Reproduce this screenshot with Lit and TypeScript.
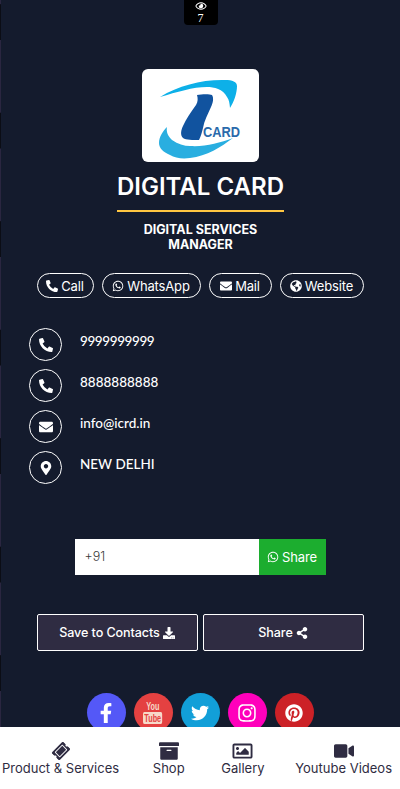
import { LitElement, html, css } from "lit";
import { customElement } from "lit/decorators.js";

const fa = (vb: string, d: string, cls = "ic") =>
  html`<svg class=${cls} viewBox=${vb} aria-hidden="true"><path fill="currentColor" d=${d}></path></svg>`;

const PHONE = "M497.39 361.8l-112-48a24 24 0 0 0-28 6.9l-49.6 60.6A370.66 370.66 0 0 1 130.6 204.11l60.6-49.6a23.94 23.94 0 0 0 6.9-28l-48-112A24.16 24.16 0 0 0 122.6.61l-104 24A24 24 0 0 0 0 48c0 256.5 207.9 464 464 464a24 24 0 0 0 23.4-18.6l24-104a24.29 24.29 0 0 0-14.01-27.6z";
const WA = "M380.9 97.1C339 55.1 283.2 32 223.9 32c-122.4 0-222 99.6-222 222 0 39.1 10.2 77.3 29.6 111L0 480l117.7-30.9c32.4 17.7 68.9 27 106.1 27h.1c122.3 0 224.1-99.6 224.1-222 0-59.3-25.2-115-67.1-157zm-157 341.6c-33.2 0-65.7-8.9-94-25.7l-6.7-4-69.8 18.3L72 359.2l-4.4-7c-18.5-29.4-28.2-63.3-28.2-98.2 0-101.7 82.8-184.5 184.6-184.5 49.3 0 95.6 19.2 130.4 54.1 34.8 34.9 56.2 81.2 56.1 130.5 0 101.8-84.9 184.6-186.6 184.6zm101.2-138.2c-5.5-2.8-32.8-16.2-37.9-18-5.1-1.9-8.8-2.8-12.5 2.8-3.7 5.6-14.3 18-17.6 21.8-3.2 3.7-6.5 4.2-12 1.4-32.6-16.3-54-29.1-75.5-66-5.7-9.8 5.7-9.1 16.3-30.3 1.8-3.7.9-6.9-.5-9.7-1.4-2.8-12.5-30.1-17.1-41.2-4.5-10.8-9.1-9.3-12.5-9.5-3.2-.2-6.9-.2-10.6-.2-3.7 0-9.7 1.4-14.8 6.9-5.1 5.6-19.4 19-19.4 46.3 0 27.3 19.9 53.7 22.6 57.4 2.8 3.7 39.1 59.7 94.8 83.8 35.2 15.2 49 16.5 66.6 13.9 10.7-1.6 32.8-13.4 37.4-26.4 4.6-13 4.6-24.1 3.2-26.4-1.3-2.5-5-3.9-10.5-6.6z";
const MAIL = "M502.3 190.8c3.9-3.1 9.7-.2 9.7 4.7V400c0 26.5-21.5 48-48 48H48c-26.5 0-48-21.5-48-48V195.6c0-5 5.7-7.8 9.7-4.7 22.4 17.4 52.1 39.5 154.1 113.6 21.1 15.4 56.7 47.8 92.2 47.6 35.7.3 72-32.8 92.3-47.6 102-74.1 131.6-96.3 154-113.7zM256 320c23.2.4 56.6-29.2 73.4-41.4 132.7-96.3 142.8-104.7 173.4-128.7 5.8-4.5 9.2-11.5 9.2-18.9v-19c0-26.5-21.5-48-48-48H48C21.5 64 0 85.5 0 112v19c0 7.4 3.4 14.3 9.2 18.9 30.6 23.9 40.7 32.4 173.4 128.7 16.8 12.2 50.2 41.8 73.4 41.4z";
const GLOBE = "M248 8C111.03 8 0 119.03 0 256s111.03 248 248 248 248-111.03 248-248S384.970 8 248 8zm82.29 357.6c-3.9 3.880-7.990 7.950-11.310 11.280-2.990 3-5.100 6.700-6.170 10.710-1.510 5.660-2.730 11.380-4.770 16.870l-17.390 46.850c-13.760 3-28 4.690-42.650 4.690v-27.380c1.690-12.620-7.640-36.260-22.630-51.250-6-6-9.370-14.140-9.370-22.630v-32.010c0-11.640-6.270-22.340-16.460-27.970-14.370-7.950-34.810-19.060-48.810-26.110-11.480-5.780-22.100-13.140-31.650-21.750l-.8-.72a114.792 114.792 0 0 1-18.060-20.740c-9.380-13.770-24.660-36.420-34.590-51.140 20.470-45.500 57.360-82.040 103.200-101.890l24.010 12.010C203.480 89.740 216 82.010 216 70.110v-11.300c7.990-1.290 16.120-2.110 24.390-2.420l28.300 28.300c6.250 6.250 6.250 16.380 0 22.630L264 112l-10.340 10.340c-3.120 3.120-3.120 8.190 0 11.310l4.690 4.690c3.120 3.120 3.120 8.190 0 11.310l-8 8a8.008 8.008 0 0 1-5.670 2.340h-8.990c-2.080 0-4.080.810-5.580 2.270l-9.920 9.650a8.008 8.008 0 0 0-1.580 9.310l15.590 31.190c2.660 5.320-1.210 11.580-7.150 11.580h-5.640c-1.930 0-3.790-.700-5.240-1.960l-9.280-8.060a16.017 16.017 0 0 0-15.550-3.100l-31.170 10.390a11.950 11.950 0 0 0-8.170 11.340c0 4.530 2.560 8.660 6.610 10.690l11.080 5.540c9.410 4.710 19.790 7.160 30.310 7.160s22.590 27.290 32 32h66.750c8.490 0 16.620 3.370 22.630 9.370l13.690 13.690a30.503 30.503 0 0 1 8.930 21.570 46.536 46.536 0 0 1-13.720 32.980zM417 274.250c-5.790-1.450-10.840-5-14.150-9.970l-17.980-26.970a23.970 23.970 0 0 1 0-26.620l19.590-29.380c2.320-3.470 5.500-6.290 9.240-8.160l12.980-6.490C440.200 193.590 448 223.870 448 256c0 8.670-.740 17.160-1.830 25.540L417 274.250z";
const PIN = "M172.3 501.7C27 291 0 256 0 192 0 86 86 0 192 0s192 86 192 192c0 64-27 99-172.3 309.7-9.5 13.8-29.9 13.8-39.4 0zM192 272c44.2 0 80-35.8 80-80s-35.8-80-80-80-80 35.8-80 80 35.8 80 80 80z";
const DOWNLOAD = "M216 0h80c13.3 0 24 10.7 24 24v168h87.7c17.8 0 26.7 21.5 14.1 34.1L269.7 378.3c-7.5 7.500-19.8 7.500-27.3 0L90.1 226.1c-12.6-12.6-3.7-34.1 14.1-34.1H192V24c0-13.3 10.7-24 24-24zm296 376v112c0 13.3-10.7 24-24 24H24c-13.3 0-24-10.7-24-24V376c0-13.3 10.7-24 24-24h146.7l49 49c20.1 20.1 52.5 20.1 72.6 0l49-49H488c13.3 0 24 10.7 24 24zm-124 88c0-11-9-20-20-20s-20 9-20 20 9 20 20 20 20-9 20-20zm64 0c0-11-9-20-20-20s-20 9-20 20 9 20 20 20 20-9 20-20z";
const SHARE = "M352 320c-22.6 0-43.4 7.8-59.8 20.9l-102.5-64.1c3-13.7 3-27.9 0-41.6l102.5-64.1C308.6 184.2 329.4 192 352 192c53 0 96-43 96-96S405 0 352 0s-96 43-96 96c0 7.2.8 14.1 2.3 20.8l-102.5 64.1C139.4 167.8 118.6 160 96 160c-53 0-96 43-96 96s43 96 96 96c22.6 0 43.4-7.8 59.8-20.9l102.5 64.1c-1.5 6.8-2.3 13.8-2.3 20.8 0 53 43 96 96 96s96-43 96-96-43-96-96-96z";
const EYE = "M288 144a110.94 110.94 0 0 0-31.24 5 55.4 55.4 0 0 1 7.24 27 56 56 0 0 1-56 56 55.4 55.4 0 0 1-27-7.24A111.71 111.71 0 1 0 288 144zm284.52 97.4C518.29 135.59 410.93 64 288 64S57.680 135.640 3.480 241.410a32.350 32.350 0 0 0 0 29.190C57.710 376.410 165.070 448 288 448s230.320-71.640 284.520-177.410a32.350 32.350 0 0 0 0-29.190zM288 400c-98.650 0-189.090-55-237.930-144C98.910 167 189.340 112 288 112s189.090 55 237.930 144C477.100 345 386.660 400 288 400z";
const FB = "M279.1 288l14.2-92.7h-88.9v-60.1c0-25.4 12.4-50.1 52.2-50.1h40.4V6.3S260.4 0 225.4 0c-73.2 0-121.1 44.4-121.1 124.7v70.6H22.9V288h81.4v224h100.2V288z";
const TW = "M459.4 151.7c.3 4.5.3 9.1.3 13.6 0 138.7-105.6 298.6-298.6 298.6-59.5 0-114.7-17.2-161.1-47.1 8.4 1 16.6 1.3 25.3 1.3 49.1 0 94.2-16.6 130.3-44.8-46.1-1-84.8-31.2-98.1-72.8 6.5 1 13 1.6 19.8 1.6 9.4 0 18.8-1.3 27.6-3.6-48.1-9.7-84.1-52-84.1-103v-1.3c14 7.8 30.2 12.7 47.4 13.3-28.3-18.8-46.8-51-46.8-87.4 0-19.5 5.2-37.4 14.3-53 51.7 63.7 129.3 105.3 216.4 109.8-1.6-7.8-2.6-15.9-2.6-24 0-57.8 46.8-104.9 104.9-104.9 30.2 0 57.5 12.7 76.7 33.1 23.7-4.5 46.5-13.3 66.6-25.3-7.8 24-24.4 44.8-46.1 57.8 21.1-2.3 41.6-8.1 60.4-16.2-14.3 20.8-32.2 39.3-52.6 54.3z";
const IG = "M224.1 141c-63.6 0-114.9 51.3-114.9 114.9s51.3 114.9 114.9 114.9S339 319.5 339 255.9 287.7 141 224.1 141zm0 189.6c-41.1 0-74.7-33.5-74.7-74.7s33.5-74.7 74.7-74.7 74.7 33.5 74.7 74.7-33.6 74.7-74.7 74.7zm146.4-194.3c0 14.9-12 26.8-26.8 26.8-14.9 0-26.8-12-26.8-26.8s12-26.8 26.8-26.8 26.8 12 26.8 26.8zm76.1 27.2c-1.7-35.9-9.9-67.7-36.2-93.9-26.2-26.2-58-34.4-93.9-36.2-37-2.1-147.9-2.1-184.9 0-35.8 1.7-67.6 9.9-93.9 36.1s-34.4 58-36.2 93.9c-2.1 37-2.1 147.9 0 184.9 1.7 35.9 9.9 67.7 36.2 93.9s58 34.4 93.9 36.2c37 2.1 147.9 2.1 184.9 0 35.9-1.7 67.7-9.9 93.9-36.2 26.2-26.2 34.4-58 36.2-93.9 2.1-37 2.1-147.8 0-184.8zM398.8 388c-7.8 19.6-22.9 34.7-42.6 42.6-29.5 11.7-99.5 9-132.1 9s-102.7 2.6-132.1-9c-19.6-7.8-34.7-22.9-42.6-42.6-11.7-29.5-9-99.5-9-132.1s-2.6-102.7 9-132.1c7.8-19.6 22.9-34.7 42.6-42.6 29.5-11.7 99.5-9 132.1-9s102.7-2.6 132.1 9c19.6 7.8 34.7 22.9 42.6 42.6 11.7 29.5 9 99.5 9 132.1s2.7 102.7-9 132.1z";
const PT = "M248 8C111 8 0 119 0 256c0 105.200 65.400 195.100 157.800 231.300-2.200-19.700-4.100-50 .8-71.500 4.500-19.500 29.100-123.400 29.100-123.400s-7.400-14.900-7.400-36.900c0-34.500 20-60.300 44.900-60.300 21.200 0 31.400 15.900 31.400 35 0 21.300-13.600 53.200-20.600 82.800-5.900 24.700 12.400 44.900 36.800 44.900 44.100 0 78-46.500 78-113.700 0-59.400-42.700-100.900-103.700-100.900-70.600 0-112.100 53-112.100 107.800 0 21.300 8.200 44.200 18.500 56.700 2 2.500 2.300 4.600 1.700 7.200-1.900 7.800-6.100 24.700-6.900 28.200-1.100 4.600-3.600 5.500-8.300 3.300-31-14.400-50.400-59.800-50.400-96.200 0-78.300 56.900-150.200 164-150.200 86.100 0 153 61.300 153 143.300 0 85.500-53.900 154.300-128.700 154.300-25.100 0-48.800-13.100-56.900-28.500l-15.500 59c-5.600 21.500-20.700 48.500-30.800 65C198.800 500.500 223 504 248 504c137 0 248-111 248-248S385 8 248 8z";
const TICKET = "M128 160h320v192H128V160zm400 96c0 26.500 21.500 48 48 48v96c0 26.500-21.500 48-48 48H48c-26.500 0-48-21.500-48-48v-96c26.500 0 48-21.500 48-48s-21.500-48-48-48v-96c0-26.500 21.500-48 48-48h480c26.500 0 48 21.500 48 48v96c-26.500 0-48 21.500-48 48zm-48-104c0-13.300-10.700-24-24-24H120c-13.300 0-24 10.700-24 24v208c0 13.300 10.700 24 24 24h336c13.300 0 24-10.700 24-24V152z";
const ARCHIVE = "M32 448c0 17.700 14.300 32 32 32h384c17.700 0 32-14.300 32-32V160H32v288zm160-212c0-6.600 5.400-12 12-12h104c6.600 0 12 5.400 12 12v8c0 6.600-5.400 12-12 12H204c-6.600 0-12-5.400-12-12v-8zM480 32H32C14.300 32 0 46.300 0 64v48c0 8.800 7.200 16 16 16h480c8.800 0 16-7.200 16-16V64c0-17.700-14.300-32-32-32z";
const IMAGE = "M464 64H48C21.490 64 0 85.490 0 112v288c0 26.510 21.490 48 48 48h416c26.510 0 48-21.490 48-48V112c0-26.510-21.490-48-48-48zm-6 336H54a6 6 0 0 1-6-6V118a6 6 0 0 1 6-6h404a6 6 0 0 1 6 6v276a6 6 0 0 1-6 6zM128 152c-22.091 0-40 17.909-40 40s17.909 40 40 40 40-17.909 40-40-17.909-40-40-40zM96 352h320v-80l-87.515-87.515c-4.686-4.686-12.284-4.686-16.971 0L192 304l-39.515-39.515c-4.686-4.686-12.284-4.686-16.971 0L96 304v48z";
const VIDEO = "M336.2 64H47.800C21.400 64 0 85.400 0 111.800v288.400C0 426.600 21.400 448 47.800 448h288.400c26.400 0 47.800-21.400 47.800-47.800V111.800c0-26.400-21.400-47.800-47.800-47.800zm189.400 37.700L416 177.300v157.400l109.600 75.500c21.200 14.600 50.400-.3 50.400-25.800V127.500c0-25.400-29.100-40.400-50.400-25.800z";

@customElement("app-root")
export class AppRoot extends LitElement {
  static styles = css`
    :host { display: block; width: 400px; height: 789px; overflow: hidden; color: #fff; font-family: "Inter", "Noto Sans", sans-serif; position: relative;
      background: linear-gradient(#2a2640 0 73px, #0b0d15 73px 108.5px) 0 40px / 1px 108.5px repeat-y, #141b2d; }
    * { box-sizing: border-box; }
    .page { height: 727px; overflow: hidden; display: flex; flex-direction: column; align-items: center; }
    .page > * { flex: none; }
    .ic { width: 1em; height: 1em; display: inline-block; vertical-align: -0.125em; flex: none; }
    .views { width: 34px; height: 25px; margin-left: 1px; background: #000; border-radius: 0 0 4px 4px; display: flex; flex-direction: column; align-items: center; font: 12px/13px "Liberation Serif", serif; padding-top: 1px; }
    .views .ic { width: 12px; height: 10px; display: block; margin-bottom: 1px; vertical-align: 0; }
    .logo { width: 117px; height: 93px; background: #fff; border-radius: 6px; margin: 44px 0 0 1px; display: block; }
    h1 { margin: 11px 0 0 1px; font-size: 24px; line-height: 27px; font-weight: 600; letter-spacing: 0; text-align: center; white-space: nowrap; }
    .rule { width: 167px; height: 2px; background: #ffc641; margin: 10px 0 0 1px; }
    .role { margin: 10px 0 0 1px; text-align: center; font-size: 12.500px; line-height: 15px; font-weight: 700; width: 170px; }
    .pills { display: flex; gap: 8px; margin-top: 21px; width: 327px; justify-content: space-between; }
    .pill { height: 25px; border: 1px solid #fff; border-radius: 13px; display: flex; align-items: center; justify-content: center; gap: 3px; font-size: 13px; letter-spacing: -0.15px; }
    .pill .ic { width: 12px; height: 12px; }
    .contacts { align-self: flex-start; margin: 30px 0 0 29px; display: flex; flex-direction: column; gap: 8px; }
    .row { display: flex; gap: 18px; height: 33px; }
    .circle { width: 33px; height: 33px; border: 1px solid #fff; border-radius: 50%; display: flex; align-items: center; justify-content: center; }
    .circle .ic { width: 14px; height: 14px; }
    .row span { font: 500 13.500px/17px "Lato", sans-serif; margin-top: 5px; }
    .row span.tight { letter-spacing: -0.4px; }
    .wa { display: flex; margin-top: 55px; width: 251px; height: 36px; }
    .wa .num { width: 184px; background: #fff; color: #3a3a3a; font-size: 12.500px; font-weight: 300; line-height: 36px; padding-left: 10px; }
    .wa .go { flex: 1; background: #1cad2f; display: flex; align-items: center; justify-content: center; gap: 3px; font-size: 13px; letter-spacing: -0.1px; }
    .wa .go .ic { width: 12px; height: 12px; }
    .actions { display: flex; gap: 5px; margin-top: 39px; }
    .action { width: 161px; height: 37px; background: #2f2c42; border: 1px solid #fff; border-radius: 2px; display: flex; align-items: center; justify-content: center; gap: 3px; font-size: 12.600px; font-weight: 500; letter-spacing: -0.1px; }
    .action .ic { width: 12px; height: 12px; }
    .social { display: flex; gap: 8px; margin-top: 42px; }
    .s { width: 39px; height: 39px; border-radius: 50%; display: flex; align-items: center; justify-content: center; flex: none; }
    .s .ic { width: 20px; height: 20px; }
    .s .tw { width: 18px; height: 18px; }
    .s .pt { width: 18px; height: 18px; }
    .yt { display: flex; flex-direction: column; align-items: center; font: 700 11px/11px "Liberation Sans", sans-serif; color: #f7d9c9; transform: scaleX(0.66); }
    .yt b { display: block; font-weight: 700; }
    .yt b + b { background: #f7d9c9; color: #e44141; border-radius: 2px; padding: 0 2px; line-height: 12px; }
    .nav { position: absolute; left: 0; right: 0; bottom: 0; height: 62px; background: #fff; color: #2f2c42; display: flex; justify-content: space-between; padding: 14px 8px 0 2px; font-size: 13px; }
    .nav div { display: flex; flex-direction: column; align-items: center; line-height: 15px; }
    .nav .gal { margin: 0 -3px 0 3px; }
    .nav .ic { width: 20px; height: 20px; vertical-align: 0; display: block; }
    .nav .gal .ic { width: 21px; }
    .nav .ic.tilt { transform: rotate(-45deg) scale(0.82); }
  `;

  render() {
    return html`
      <div class="page">
        <div class="views">${fa("0 0 576 512", EYE)}<span>7</span></div>
        <svg class="logo" viewBox="0 0 117 93" role="img" aria-label="iCard logo">
          <path fill="#0db0e8" d="M18 28C36 17 58 11 80 11c9-.5 15 1 15 6 0 7-3 16-7 22-.5-5-.8-8-3-11-4-8-13-10-20-10-14 0-30 5-47 10z"></path>
          <path fill="#11539f" d="M55 26c5-1 13-1 15 0 2 3 1 8-1 12-3 7-7 14-8 21-1 4-2 8-4 12-6 0-13 0-16-2-3-3-2-8 0-12 3-7 8-14 13-21 2-3 2-7 1-10z"></path>
          <path fill="#29aee0" d="M25 58c-1 5 1 9 5 13 6 4 12 6 18 6 15 1 29-3 43-8-12 9-26 18-43 20-8 1-15 0-20-3-7-3-11-7-11-12 0-6 4-12 8-16z"></path>
          <text x="61" y="68" fill="#2a6aab" font-family="Liberation Sans, sans-serif" font-size="14" font-weight="700" textLength="37" lengthAdjust="spacingAndGlyphs">CARD</text>
        </svg>
        <h1>DIGITAL CARD</h1>
        <div class="rule"></div>
        <div class="role">DIGITAL SERVICES MANAGER</div>
        <div class="pills">
          <div class="pill" style="width:57px">${fa("0 0 512 512", PHONE)}Call</div>
          <div class="pill" style="width:99px">${fa("0 0 448 512", WA)}WhatsApp</div>
          <div class="pill" style="width:63px">${fa("0 0 512 512", MAIL)}Mail</div>
          <div class="pill" style="width:84px">${fa("0 0 496 512", GLOBE)}Website</div>
        </div>
        <div class="contacts">
          <div class="row"><div class="circle">${fa("0 0 512 512", PHONE)}</div><span class="tight">9999999999</span></div>
          <div class="row"><div class="circle">${fa("0 0 512 512", PHONE)}</div><span>8888888888</span></div>
          <div class="row"><div class="circle">${fa("0 0 512 512", MAIL)}</div><span>info@icrd.in</span></div>
          <div class="row"><div class="circle">${fa("0 0 384 512", PIN)}</div><span>NEW DELHI</span></div>
        </div>
        <div class="wa"><div class="num">+91</div><div class="go">${fa("0 0 448 512", WA)}Share</div></div>
        <div class="actions">
          <div class="action">Save to Contacts ${fa("0 0 512 512", DOWNLOAD)}</div>
          <div class="action">Share ${fa("0 0 448 512", SHARE)}</div>
        </div>
        <div class="social">
          <div class="s" style="background:#5458f7">${fa("0 0 320 512", FB)}</div>
          <div class="s" style="background:#e44141"><div class="yt"><b>You</b><b>Tube</b></div></div>
          <div class="s" style="background:#129fd8">${fa("0 0 512 512", TW, "ic tw")}</div>
          <div class="s" style="background:#ff00bb">${fa("0 0 448 512", IG)}</div>
          <div class="s" style="background:#cc2127">${fa("0 0 496 512", PT, "ic pt")}</div>
        </div>
      </div>
      <div class="nav">
        <div>${fa("0 0 576 512", TICKET, "ic tilt")}Product &amp; Services</div>
        <div>${fa("0 0 512 512", ARCHIVE)}Shop</div>
        <div class="gal">${fa("0 0 512 512", IMAGE)}Gallery</div>
        <div>${fa("0 0 576 512", VIDEO)}Youtube Videos</div>
      </div>
    `;
  }
}
